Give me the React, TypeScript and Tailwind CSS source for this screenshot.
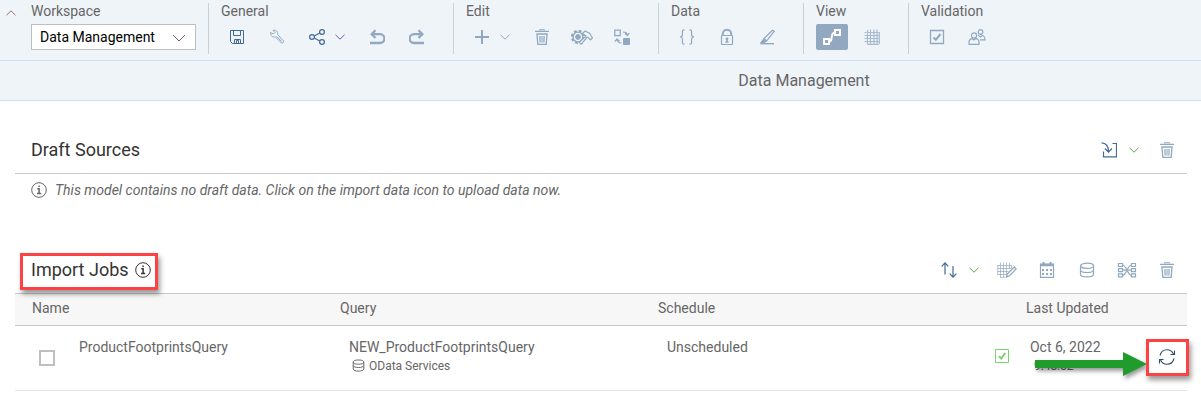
import type { ReactNode } from "react";

function Svg({ children, w = 16, h = 16, className = "" }: { children: ReactNode; w?: number; h?: number; className?: string }) {
  return (
    <svg width={w} height={h} viewBox={`0 0 ${w} ${h}`} fill="none" stroke="currentColor" strokeWidth="1" className={`shrink-0 ${className}`} aria-hidden="true">
      {children}
    </svg>
  );
}

const Chevron = ({ className = "" }: { className?: string }) => (
  <Svg w={10} h={6} className={className}>
    <path d="M.5 .8 5 5.2 9.500 .8" />
  </Svg>
);

const Save = () => (
  <Svg>
    <path d="M1.500 1.500h13v13h-11l-2-2zM4.500 1.500v5h7v-5M5.500 14.500v-4h6v4M7.500 14v-2.500h2V14" />
  </Svg>
);

const Wrench = () => (
  <Svg>
    <path d="M1.500 3.500 4.500 5 6 3.500 4 1.300C6.500.5 9.200 2.300 8.700 5.600l5.600 6.200c1 1.200-.9 3-2.100 2L6.200 7.900C3.700 8.700 1.300 6.500 1.500 3.500zM7.700 7.400l5 5.200" />
  </Svg>
);

const Share = () => (
  <Svg>
    <g strokeWidth="1.200">
      <circle cx="3" cy="8" r="2.400" />
      <circle cx="13" cy="3" r="2.400" />
      <circle cx="13" cy="13" r="2.400" />
      <path d="M5.200 7 10.800 4M5.200 9l5.600 3" />
    </g>
  </Svg>
);

const Undo = () => (
  <Svg>
    <path strokeWidth="2.300" d="M6.500 1.200 2.600 5.200 6.500 9M3 5.200h8a4.300 4.300 0 0 1 0 8.800H1" />
  </Svg>
);

const Redo = () => (
  <Svg>
    <path strokeWidth="2.300" d="M9.500 1.200 13.400 5.200 9.500 9M13 5.200H5a4.300 4.300 0 0 0 0 8.800h10" />
  </Svg>
);

const Plus = () => (
  <Svg>
    <path strokeWidth="2" d="M8 1v14M1 8h14" />
  </Svg>
);

const Trash = () => (
  <Svg>
    <path d="M5.500 1.500V.7h5v.8" />
    <path strokeWidth="1.300" d="M1 2.300h14M2.300 5h11.400M3 5.500l.8 9.800h8.400L13 5.500" />
    <path d="M5.500 7l.4 6.500M8 7v6.500M10.500 7l-.4 6.500M6.800 7l.1 6.500M9.200 7v6.500" strokeWidth=".8" />
  </Svg>
);

const GearHammer = () => (
  <Svg w={22}>
    <circle cx="7" cy="8" r="6" strokeWidth="2.400" strokeDasharray="2.700 2.012" />
    <circle cx="7" cy="8" r="4.900" strokeWidth="1.300" />
    <circle cx="7" cy="8" r="2.400" fill="currentColor" />
    <path fill="#eff4f9" strokeWidth="1.200" d="M11.500 4.500 14 2l4.500 2.300 3 4.700-2 1.800-2.500-2.500-1.200.2-5.600 6.800-2-2L15 7z" />
  </Svg>
);

const Swap = () => (
  <Svg>
    <path strokeWidth="1.300" d="M.8 1.200h5.400v5.400H.8z" />
    <path fill="currentColor" d="M9.500 9.500h6v6h-6z" />
    <path strokeWidth="1.200" d="M9 3c2 0 4 .8 4.500 3M11 4.500l2.500 2L15.500 4M7.500 14c-2 0-4-.8-4.500-3.500M.8 12.500 3 10l2.500 2" />
  </Svg>
);

const Braces = () => (
  <Svg>
    <path strokeWidth="1.200" d="M5.500.8C2.500.8 3.500 3 3.500 5S2.800 8 1 8c1.800 0 2.500 1 2.500 3s-1 4.200 2 4.200M10.500.8c3 0 2 2.200 2 4.200s.7 3 2.500 3c-1.800 0-2.500 1-2.500 3s1 4.200-2 4.200" />
  </Svg>
);

const Lock = () => (
  <Svg>
    <path strokeWidth="2" d="M3.800 6.500V5a4.200 4.200 0 0 1 8.400 0v1.500" />
    <rect x="2.500" y="6.500" width="11" height="9" rx=".8" strokeWidth="1.200" />
    <circle cx="8" cy="9.800" r="1" fill="currentColor" />
    <path strokeWidth="1.600" d="M8 10v3M6.500 13h3" />
  </Svg>
);

const Pencil = () => (
  <Svg>
    <path strokeWidth="1.200" d="M13.500 1.300 5 9.500l2.500 2.500L15.200 2.300z" />
    <path fill="currentColor" d="M5 9.500 7.500 12l-2.500 2H1.500z" />
    <path strokeWidth="1.400" d="M1.500 14.700H15" />
  </Svg>
);

const Flow = () => (
  <Svg w={18} h={16}>
    <path strokeWidth="2" d="M1 10h5v5H1zM12 1h5v5h-5zM6 12.500c3.500 0 2-3 3-6 .5-2 1-3 3-3" />
  </Svg>
);

const Grid = () => (
  <Svg className="opacity-75">
    <path strokeWidth="1.200" d="M.5 3.500h2M.5 6.500h14M.5 9.500h14M.5 12.500h14M3 3.500h11.500M3.500 15.300h11M3.500 1v14.500M6.500 .5v15M10 .5v15M13 .5v15M15.300 3v12" />
  </Svg>
);

const GridEdit = () => (
  <Svg w={20}>
    <path className="opacity-70" d="M.5 3.500h14M.5 6.500h14M.5 9.500h11M.5 12.500h9M3 15.300h5M.8 3v10M3.500 .5v15M6.500 .5v15M9.500 .5v13M12.500 1v6M14.700 3v3" />
    <path fill="#fff" strokeWidth="1.300" d="m9.500 15 .7-3 7-7 2 2-7 7z" />
  </Svg>
);

const Checked = () => (
  <Svg>
    <path strokeWidth="1.300" d="M1.500 1.500h13v13h-13z" />
    <path strokeWidth="2" d="m4.500 8.500 2.300 2.300L11.500 5" />
  </Svg>
);

const People = () => (
  <Svg w={18}>
    <g strokeWidth="1.200">
      <circle cx="6" cy="6.500" r="2.600" />
      <path d="M1 15.300v-1.600c0-2.500 1.500-4 3.500-4L6 11l1.500-1.300c2 0 3.500 1.500 3.500 4v1.600z" />
      <circle cx="12.500" cy="3" r="2.300" />
      <path d="M10.300 6.200 12.500 8l1.800-1.500c1.600.2 2.600 1.600 2.600 4.300H12" />
    </g>
  </Svg>
);

const ImportIcon = () => (
  <Svg>
    <path strokeWidth="1.200" d="M.5.800C5 1 7.500 4 7.500 9.500M4 6.500 7.500 10.200 11 6.500M11.500 1.500h4v13.300h-13V9.500" />
  </Svg>
);

const Sort = () => (
  <Svg>
    <path strokeWidth="1.200" d="M4 12.500V1M.700 4.300 4 .900l3.300 3.400M12 4v11.500M8.700 11.700l3.300 3.400 3.300-3.400" />
  </Svg>
);

const Calendar = () => (
  <Svg>
    <path strokeWidth="1.200" d="M1.500 2h13v13.400h-13z" />
    <path strokeWidth="2.500" d="M1.500 3h13" />
    <path strokeWidth="2" d="M4.500 0v3M11.500 0v3" />
    <path strokeWidth="2" strokeDasharray="2 2" d="M3 8h10M3 12h10" />
  </Svg>
);

const Database = ({ size = 16 }: { size?: number }) => (
  <svg width={size} height={size} viewBox="0 0 16 16" fill="none" stroke="currentColor" strokeWidth="1.200" className="shrink-0" aria-hidden="true">
    <ellipse cx="8" cy="3.800" rx="6.500" ry="2.600" />
    <path d="M1.500 3.800v8.500c0 3.500 13 3.500 13 0V3.800M1.500 8c0 3.300 13 3.300 13 0" />
  </svg>
);

const Mapping = () => (
  <Svg w={20}>
    <path strokeWidth="1.200" d="M1.500 1.500h4v3h-4zM1.500 6.700h4v3h-4zM1.500 11.900h4v3h-4zM14.500 1.500h4v3h-4zM14.500 6.700h4v3h-4zM14.500 11.900h4v3h-4zM5.500 3c4 0 5 10.400 9 10.400M5.500 13.400C9.500 13.400 10.500 3 14.500 3M5.500 8.200h3.500M11 8.200h3.500" />
  </Svg>
);

const Info = () => (
  <Svg>
    <circle cx="8" cy="8" r="7.300" />
    <path strokeWidth="1.500" d="M6.300 6.700h1.800v4.600M6 11.600h4.200M7.300 4.200h1.500" />
  </Svg>
);

const Refresh = () => (
  <Svg w={18} h={18}>
    <path strokeWidth="1.100" d="M2 7.500C3 3.500 6 1.700 9 1.700c3 0 5.200 1.500 6.500 4.300M16.500 2.500V6.500h-4M16 10.500c-1 4-4 5.800-7 5.800-3 0-5.200-1.500-6.500-4.300M1.500 15.500v-4h4" />
  </Svg>
);

function Tool({ label, children, wide, active, strong }: { label: string; children: ReactNode; wide?: boolean; active?: boolean; strong?: boolean }) {
  const tone = active ? "bg-[#91a8c0] text-white" : strong ? "text-[#426b95]" : "text-[#91a8c0]";
  return (
    <button type="button" aria-label={label} className={`flex h-[26px] items-center rounded-xs ${wide ? "w-[52px] gap-2.5 pl-2" : "w-8 justify-center"} ${tone}`}>
      {children}
    </button>
  );
}

function Group({ title, children }: { title: string; children: ReactNode }) {
  return (
    <section className="border-l border-[#c9d0d8] pr-5 pb-1 pl-3 last:pr-3">
      <h2 className="mb-1 leading-[17px]">{title}</h2>
      <div className="flex gap-2">{children}</div>
    </section>
  );
}

function Action({ label, children, strong }: { label: string; children: ReactNode; strong?: boolean }) {
  return (
    <button type="button" aria-label={label} className={`flex h-8 w-10 items-center justify-center ${strong ? "text-[#426b95]" : "text-[#91a8c0]"}`}>
      {children}
    </button>
  );
}

export default function App() {
  return (
    <div className="bg-white font-['Roboto','Noto_Sans',sans-serif] text-sm text-[#666]">
      <header className="flex border-b border-[#cde0f0] bg-[#eff4f9] pt-[3px] pb-1.5">
        <button type="button" aria-label="Collapse toolbar" className="flex h-5 w-[22px] items-center justify-center text-[#a4686f]">
          <Chevron className="rotate-180" />
        </button>
        <div className="pr-3 pl-[9px]">
          <label htmlFor="workspace" className="mb-1 block leading-[17px]">Workspace</label>
          <div className="relative">
            <select id="workspace" className="h-[26px] w-[165px] appearance-none border border-[#bfbfbf] bg-white pr-8 pl-2 text-black">
              <option>Data Management</option>
            </select>
            <svg width="14" height="8" viewBox="0 0 14 8" fill="none" stroke="#7d5a78" className="pointer-events-none absolute top-2.5 right-2.5" aria-hidden="true">
              <path d="M1 1l6 6 6-6" />
            </svg>
          </div>
        </div>
        <Group title="General">
          <Tool label="Save" strong><Save /></Tool>
          <Tool label="Settings"><Wrench /></Tool>
          <Tool label="Share" wide strong><Share /><Chevron className="text-[#7a55b5]" /></Tool>
          <Tool label="Undo"><Undo /></Tool>
          <Tool label="Redo"><Redo /></Tool>
        </Group>
        <Group title="Edit">
          <Tool label="Add" wide><Plus /><Chevron /></Tool>
          <Tool label="Delete"><Trash /></Tool>
          <Tool label="Configure"><GearHammer /></Tool>
          <Tool label="Replace"><Swap /></Tool>
        </Group>
        <Group title="Data">
          <Tool label="Formula"><Braces /></Tool>
          <Tool label="Lock"><Lock /></Tool>
          <Tool label="Edit data"><Pencil /></Tool>
        </Group>
        <Group title="View">
          <Tool label="Flow view" active><Flow /></Tool>
          <Tool label="Grid view"><Grid /></Tool>
        </Group>
        <Group title="Validation">
          <Tool label="Validate"><Checked /></Tool>
          <Tool label="Permissions"><People /></Tool>
        </Group>
      </header>

      <div className="border-b border-[#cde0f0] bg-[#eff4f9] pl-[407px] text-center">
        <h1 className="text-base leading-[39px]">Data Management</h1>
      </div>

      <main className="pt-[25px] pr-[14px] pb-3 pl-[15px]">
        <section>
          <div className="flex h-12 items-center border-b border-[#c8c8c8] pl-4">
            <h2 className="text-lg text-[#333]">Draft Sources</h2>
            <div className="ml-auto flex items-center">
              <Action label="Import data" strong><ImportIcon /></Action>
              <button type="button" aria-label="Import options" className="w-[18px] text-[#5aa648]"><Chevron /></button>
              <Action label="Delete drafts"><Trash /></Action>
            </div>
          </div>
          <p className="flex items-center gap-2 pt-2 pl-4 leading-4 italic">
            <Info />
            This model contains no draft data. Click on the import data icon to upload data now.
          </p>
        </section>

        <section className="pt-12">
          <div className="flex h-12 items-center border-b border-[#c8c8c8]">
            <div className="mt-1 ml-[5px] flex h-[37px] items-center gap-1.5 border-3 border-[#fc4242] pr-1 pb-1 pl-2 text-[#333] shadow-[2px_4px_5px_rgba(0,0,0,0.4)]">
              <h2 className="text-lg">Import Jobs</h2>
              <Info />
            </div>
            <div className="ml-auto flex items-center">
              <Action label="Sort" strong><Sort /></Action>
              <button type="button" aria-label="Sort options" className="w-[18px] text-[#5aa648]"><Chevron /></button>
              <Action label="Edit mapping"><GridEdit /></Action>
              <Action label="Schedule"><Calendar /></Action>
              <Action label="Data source"><Database /></Action>
              <Action label="Combine"><Mapping /></Action>
              <Action label="Delete jobs"><Trash /></Action>
            </div>
          </div>
          <table className="w-full table-fixed border-collapse text-left">
            <colgroup>
              <col className="w-16" />
              <col className="w-[244px]" />
              <col className="w-[318px]" />
              <col />
              <col className="w-8" />
              <col className="w-[138px]" />
              <col className="w-10" />
            </colgroup>
            <thead>
              <tr className="h-[31px] border-b border-[#c8c8c8] bg-[#f7f7f7]">
                <th colSpan={2} className="pb-0.5 pl-[17px] font-normal">Name</th>
                <th className="pb-0.5 pl-[17px] font-normal">Query</th>
                <th colSpan={2} className="pb-0.5 pl-[17px] font-normal">Schedule</th>
                <th colSpan={2} className="pb-0.5 pl-[17px] font-normal">Last Updated</th>
              </tr>
            </thead>
            <tbody>
              <tr className="h-[65px] border-b border-[#e5e5e5]">
                <td className="pl-6">
                  <input type="checkbox" aria-label="Select ProductFootprintsQuery" className="block size-4 appearance-none border-2 border-[#bfbfbf] bg-white" />
                </td>
                <td className="pt-[11px] align-top">ProductFootprintsQuery</td>
                <td className="pt-[11px] pl-[26px] align-top">
                  <div className="leading-5">NEW_ProductFootprintsQuery</div>
                  <div className="flex items-center gap-1 pl-[3px] text-xs leading-[18px]"><Database size={13} />OData Services</div>
                </td>
                <td className="pt-[11px] pl-[26px] align-top">Unscheduled</td>
                <td>
                  <svg width="14" height="14" viewBox="0 0 14 14" fill="none" stroke="#79d36c" className="-mt-1 ml-auto" role="img" aria-label="Succeeded">
                    <path d="M.5.500h13v13H.5z" />
                    <path strokeWidth="2" d="m4 7.300 2.200 2.200L10.300 4" />
                  </svg>
                </td>
                <td className="relative pt-[11px] pl-[21px] align-top">
                  <div className="leading-5">Oct 6, 2022</div>
                  <div className="pl-1 text-xs leading-[18px]">9:48:52</div>
                  <svg width="112" height="24" viewBox="0 0 112 24" className="absolute top-[26px] right-0 drop-shadow-[2px_3px_2px_rgba(0,0,0,0.4)]" aria-hidden="true">
                    <path fill="#1f9c2c" d="M0 8h88V0l24 12-24 12v-8H0z" />
                  </svg>
                </td>
                <td className="relative">
                  <button type="button" aria-label="Refresh import job" className="absolute top-[13px] -left-px flex h-[37px] w-[43px] items-center justify-center border-3 border-[#fc4242] text-[#2f4d6b] shadow-[2px_4px_5px_rgba(0,0,0,0.4)]">
                    <Refresh />
                  </button>
                </td>
              </tr>
            </tbody>
          </table>
        </section>
      </main>
    </div>
  );
}
